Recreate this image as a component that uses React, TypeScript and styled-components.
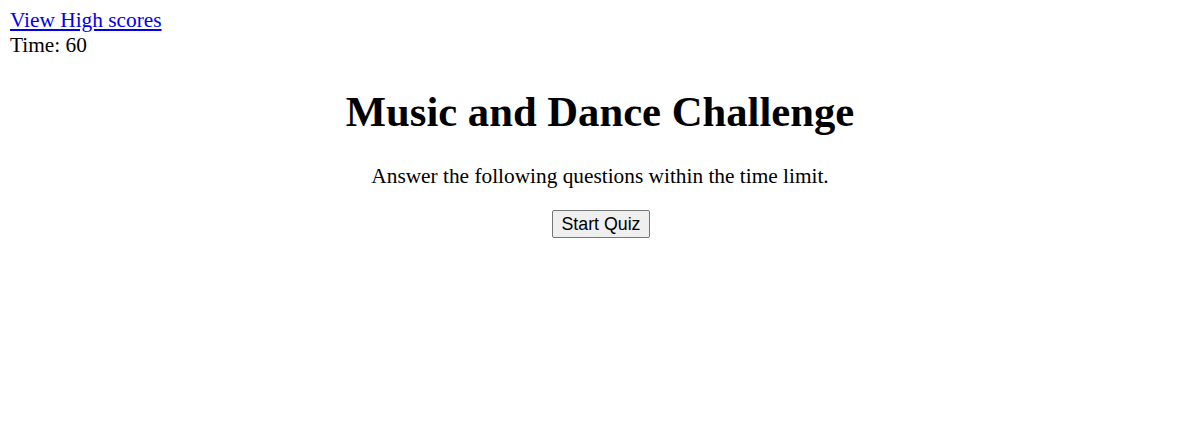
import React from "react";
import styled, { createGlobalStyle } from "styled-components";

const Global = createGlobalStyle`
  body {
    margin: 8px;
    font-family: "Liberation Serif", "Times New Roman", serif;
    font-size: 21.33px;
    color: #000;
    background: #fff;
  }
`;

const Header = styled.header`
  display: flex;
  flex-direction: column;
  align-items: flex-start;
  padding-left: 2px;
`;

const HighScores = styled.a`
  color: #0000ee;
  text-decoration: underline;
  cursor: pointer;
`;

const Timer = styled.div``;

const Main = styled.main`
  display: flex;
  flex-direction: column;
  align-items: center;
  text-align: center;
`;

const Title = styled.h1`
  font-size: 42.67px;
  font-weight: bold;
  margin: 28.6px 0;
`;

const Intro = styled.p`
  margin: 0 0 21px;
`;

const StartButton = styled.button`
  font-family: "Liberation Sans", Arial, sans-serif;
  font-size: 17.78px;
  line-height: 1.15;
  padding: 2.67px 9px;
  margin-left: 2px;
  background: #efefef;
  border: 1px solid #767676;
  border-radius: 2px;
  color: #000;
`;

export default function App() {
  return (
    <>
      <Global />
      <Header>
        <HighScores href="#">View High scores</HighScores>
        <Timer>Time: 60</Timer>
      </Header>
      <Main>
        <Title>Music and Dance Challenge</Title>
        <Intro>Answer the following questions within the time limit.</Intro>
        <StartButton>Start Quiz</StartButton>
      </Main>
    </>
  );
}
